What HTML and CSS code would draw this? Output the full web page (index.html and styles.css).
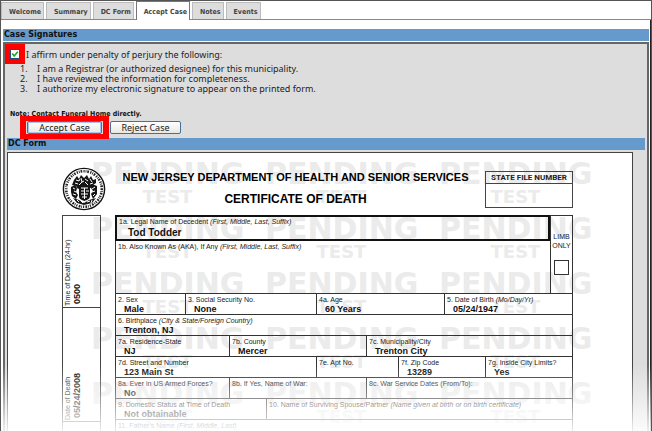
FILE: index.html
```html
<!DOCTYPE html>
<html lang="en">
<head>
<meta charset="utf-8">
<title>Accept Case</title>
<link rel="stylesheet" href="styles.css">
</head>
<body>
<div class="window">
  <nav class="tabs">
    <a class="tab" href="#welcome">Welcome</a>
    <a class="tab" href="#summary">Summary</a>
    <a class="tab" href="#dcform">DC Form</a>
    <a class="tab tab-active" href="#accept">Accept Case</a>
    <a class="tab" href="#notes">Notes</a>
    <a class="tab" href="#events">Events</a>
  </nav>
  <main class="content">
    <h2 class="bar">Case Signatures</h2>
    <div class="panel">
      <section class="signatures">
        <div class="affirm">
          <span class="mark mark-check"><input type="checkbox" id="affirm" checked><svg class="tick" viewBox="0 0 10 10" aria-hidden="true"><path d="M2.300 4.500 4.200 7 7.800 2.800" fill="none" stroke="#21a121" stroke-width="1.600"/></svg></span>
          <label for="affirm">I affirm under penalty of perjury the following:</label>
        </div>
        <ol class="terms">
          <li>I am a Registrar (or authorized designee) for this municipality.</li>
          <li>I have reviewed the information for completeness.</li>
          <li>I authorize my electronic signature to appear on the printed form.</li>
        </ol>
        <p class="note">Note: Contact Funeral Home directly.</p>
        <div class="actions">
          <span class="mark mark-button"><button class="btn btn-primary" type="button">Accept Case</button></span>
          <button class="btn" type="button">Reject Case</button>
        </div>
      </section>
      <h2 class="bar bar-form">DC Form</h2>
      <article class="paper">
        <div class="watermark" aria-hidden="true">
          <div class="wm"><b>PENDING</b><i>TEST</i></div><div class="wm"><b>PENDING</b><i>TEST</i></div><div class="wm"><b>PENDING</b><i>TEST</i></div>
          <div class="wm"><b>PENDING</b><i>TEST</i></div><div class="wm"><b>PENDING</b><i>TEST</i></div><div class="wm"><b>PENDING</b><i>TEST</i></div>
          <div class="wm"><b>PENDING</b><i>TEST</i></div><div class="wm"><b>PENDING</b><i>TEST</i></div><div class="wm"><b>PENDING</b><i>TEST</i></div>
          <div class="wm"><b>PENDING</b><i>TEST</i></div><div class="wm"><b>PENDING</b><i>TEST</i></div><div class="wm"><b>PENDING</b><i>TEST</i></div>
          <div class="wm"><b>PENDING</b><i>TEST</i></div><div class="wm"><b>PENDING</b><i>TEST</i></div><div class="wm"><b>PENDING</b><i>TEST</i></div>
        </div>
        <header class="cert-head">
          <svg class="seal" viewBox="0 0 44 44" aria-hidden="true">
            <circle cx="22" cy="22" r="20.600" fill="#fff" stroke="#111" stroke-width="1.400"/>
            <circle cx="22" cy="22" r="17.800" fill="none" stroke="#222" stroke-width="2.600" stroke-dasharray="1.200 1 .8 .9 1.700 1.300"/>
            <g fill="#151515">
              <path d="M12 13l3-4 2 3 2-4 3 3 3-3 2 4 2-3 2 4 3-1 0 4-3 2 1 2-4 1-2 2-3-2-2 2-2-2-3 1-2-3-4-1z"/>
              <path d="M9 20l4-2 2 3-1 4 2 3-2 4-4-3-1-4z"/>
              <path d="M35 19l-5-2-1 4 2 3-2 3 2 5 4-5z"/>
              <path d="M17 19h11v10c0 3-3 4-5.500 5-3-1-5.500-2-5.500-5z"/>
              <path d="M11 31l6 2 5 3 5-3 7-2-4 5-8 2-7-2z"/>
            </g>
            <path d="M14 13l3 1 1-2M19 11l1 4 2-1M23 12l3 2M28 12l2 3M13 16l3 1M17 18l3-3M23 15l3 3M28 17l3-1M19 21h7M19 24h3M24 24h3M19 27h7M20 30h5M22.500 21v11M11 21l2 1M12 24l2 1M11 27l3 1M33 20l-3 2M33 24l-3 1M33 27l-2 2M15 33l2 2M19 34l2 2M25 35l3-1M30 33l-1 3" fill="none" stroke="#fff" stroke-width="1"/>
          </svg>
          <div class="titles">
            <h1>NEW JERSEY DEPARTMENT OF HEALTH AND SENIOR SERVICES</h1>
            <h3>CERTIFICATE OF DEATH</h3>
          </div>
          <div class="file-no"><div class="file-no-label">STATE FILE NUMBER</div></div>
        </header>
        <div class="cert-body">
          <aside class="side">
            <div class="side-cell side-time"><span class="lab">Time of Death (24-hr)</span><span class="val">0500</span></div>
            <div class="side-cell side-date"><span class="lab">Date of Death</span><span class="val">05/24/2008</span></div>
          </aside>
          <div class="form">
            <div class="top">
              <div class="names">
                <div class="cell cell-name"><span class="lab">1a. Legal Name of Decedent <em>(First, Middle, Last, Suffix)</em></span><span class="val val-name">Tod Todder</span></div>
                <div class="cell cell-aka"><span class="lab">1b. Also Known As (AKA), If Any <em>(First, Middle, Last, Suffix)</em></span></div>
              </div>
              <div class="limb"><label for="limb">LIMB ONLY</label><input type="checkbox" id="limb"></div>
            </div>
            <div class="row row-2">
              <div class="cell"><span class="lab">2. Sex</span><span class="val">Male</span></div>
              <div class="cell"><span class="lab">3. Social Security No.</span><span class="val">None</span></div>
              <div class="cell"><span class="lab">4a. Age</span><span class="val">60 Years</span></div>
              <div class="cell"><span class="lab">5. Date of Birth <em>(Mo/Day/Yr)</em></span><span class="val">05/24/1947</span></div>
            </div>
            <div class="row">
              <div class="cell"><span class="lab">6. Birthplace <em>(City &amp; State/Foreign Country)</em></span><span class="val">Trenton, NJ</span></div>
            </div>
            <div class="row row-3">
              <div class="cell"><span class="lab">7a. Residence-State</span><span class="val">NJ</span></div>
              <div class="cell"><span class="lab">7b. County</span><span class="val">Mercer</span></div>
              <div class="cell"><span class="lab">7c. Municipality/City</span><span class="val">Trenton City</span></div>
            </div>
            <div class="row row-4">
              <div class="cell"><span class="lab">7d. Street and Number</span><span class="val">123 Main St</span></div>
              <div class="cell"><span class="lab">7e. Apt No.</span></div>
              <div class="cell"><span class="lab">7f. Zip Code</span><span class="val">13289</span></div>
              <div class="cell"><span class="lab">7g. Inside City Limits?</span><span class="val">Yes</span></div>
            </div>
            <div class="row row-3">
              <div class="cell"><span class="lab">8a. Ever in US Armed Forces?</span><span class="val">No</span></div>
              <div class="cell"><span class="lab">8b. If Yes, Name of War:</span></div>
              <div class="cell"><span class="lab">8c. War Service Dates (From/To):</span></div>
            </div>
            <div class="row row-5">
              <div class="cell"><span class="lab">9. Domestic Status at Time of Death</span><span class="val">Not obtainable</span></div>
              <div class="cell"><span class="lab">10. Name of Surviving Spouse/Partner <em>(Name given at birth or on birth certificate)</em></span></div>
            </div>
            <div class="row">
              <div class="cell"><span class="lab">11. Father's Name <em>(First, Middle, Last)</em></span></div>
            </div>
          </div>
        </div>
      </article>
    </div>
  </main>
  <div class="fade"></div>
</div>
</body>
</html>
```
FILE: styles.css
```css
* { box-sizing: border-box; }
body { margin: 0; font-family: "DejaVu Sans", Verdana, sans-serif; color: #222; background: #fff; }
h1, h2, h3, p, ol { margin: 0; }
.window {
  position: relative;
  height: 100vh;
  overflow: hidden;
  display: flex;
  flex-direction: column;
  border: 1px solid #555;
  border-bottom: 0;
}

/* tabs */
.tabs { display: flex; align-items: flex-end; gap: 2px; height: 19px; border-bottom: 1px solid #888; flex: none; }
.tab {
  height: 17px;
  padding: 0 2px 0 7px;
  border: 1px solid #bbb;
  border-bottom: 0;
  background: #ddd;
  color: #444;
  font: bold 7px/18px "DejaVu Sans Condensed", "DejaVu Sans", sans-serif;
  text-decoration: none;
  white-space: nowrap;
}
.tab-active { height: 19px; margin-bottom: -1px; background: #fff; border-color: #777; line-height: 20px; }

/* section bars */
.content { flex: 1; display: flex; flex-direction: column; padding: 9px 1px 0 2px; border-right: 1px solid #222; }
.bar { height: 12px; padding-left: 1px; background: #6699cc; color: #111; font: bold 8px/12px "DejaVu Sans", Verdana, sans-serif; }
.panel { flex: 1; display: flex; flex-direction: column; margin-top: 1px; padding: 0 2px; background: #ddd; border: 2px solid #666; border-bottom: 0; }

/* signatures */
.signatures { height: 94px; padding: 5px 0 0 3px; font-family: "Noto Sans", sans-serif; font-size: 9px; flex: none; }
.affirm { display: flex; align-items: center; gap: 6px; height: 10px; }
.mark { position: relative; display: inline-flex; }
.mark::after { content: ""; position: absolute; border: 5px solid #f00; pointer-events: none; }
.mark-check::after { inset: -5px; }
.mark-button::after { inset: -5px -7px; border-width: 5px 6px; }
.mark-check input { appearance: none; width: 10px; height: 10px; margin: 0; border: 1px solid #1c5180; background: #fff; }
.tick { position: absolute; inset: 0; width: 10px; height: 10px; pointer-events: none; }
.terms { margin-top: 5px; padding-left: 10px; line-height: 10px; list-style: none; counter-reset: term; }
.terms li { counter-increment: term; }
.terms li::before { content: counter(term) "."; display: inline-block; width: 17px; }
.note { margin-top: 15px; font: bold 7px/10px "DejaVu Sans Condensed", "DejaVu Sans", sans-serif; color: #111; }
.actions { display: flex; gap: 8px; padding: 2px 0 0 17px; }
.btn { height: 13px; width: 71px; padding: 0; border: 1px solid #4a6f96; border-radius: 2px; background: linear-gradient(#fff, #e8e8e2); color: #222; font: 9px/11px "Noto Sans", sans-serif; }
.btn-primary { width: 75px; box-shadow: inset 0 0 0 1px #a8c4ee; }

/* certificate */
.paper { position: relative; flex: 1; margin: 2px 12px 0 0; padding: 14px 59px 0 54px; background: #fff; border: 1px solid #444; border-bottom: 0; font-family: "Liberation Sans", Arial, sans-serif; }
.watermark { position: absolute; top: 8px; left: 83px; display: grid; grid-template-columns: repeat(3, 174px); grid-auto-rows: 55px; color: #ebebeb; font-family: "DejaVu Sans", sans-serif; }
.wm { width: 153px; text-align: center; }
.wm b { display: block; font-size: 30px; line-height: 26px; }
.wm i { display: block; font: bold 18px/20px "DejaVu Sans", sans-serif; }
.cert-head { position: relative; display: flex; height: 48px; }
.seal { width: 44px; height: 44px; flex: none; }
.titles { flex: 1; text-align: center; color: #000; }
.titles h1 { margin-top: 3px; font-size: 11px; line-height: 14px; white-space: nowrap; }
.titles h3 { margin-top: 8px; font-size: 12px; line-height: 14px; }
.file-no { width: 88px; height: 37px; margin-top: 4px; border: 1px solid #444; }
.file-no-label { height: 12px; border-bottom: 1px solid #444; text-align: center; font: bold 8px/12px Roboto, sans-serif; white-space: nowrap; }
.cert-body { position: relative; display: flex; gap: 14px; }
.side { width: 39px; flex: none; border: 1px solid #444; border-bottom: 0; }
.side-cell { writing-mode: vertical-rl; transform: rotate(180deg); width: 37px; padding-top: 1px; border-top: 1px solid #444; }
.form { flex: 1; border: 1px solid #333; border-bottom: 0; }
.lab { display: block; font-size: 7px; line-height: 9px; white-space: nowrap; color: #222; }
.val { display: block; padding-left: 6px; font-size: 9px; line-height: 10px; font-weight: bold; white-space: nowrap; color: #111; }
.val-name { padding-left: 9px; font-size: 10px; line-height: 14px; }
.side .val { padding: 2px 0 0; }
.side-time { height: 92px; }
.side-date { height: 114px; }
.top { display: flex; height: 78px; border-bottom: 1px solid #333; }
.names { flex: 1; }
.cell { padding: 1px 0 0 2px; min-width: 0; }
.cell-name { height: 26px; margin: -1px 0 0 -1px; padding-top: 0; border: 2px solid #111; }
.limb { width: 22px; border-left: 1px solid #333; display: flex; flex-direction: column; align-items: center; text-align: center; font-size: 7px; line-height: 9px; padding-top: 16px; gap: 10px; }
.limb input { appearance: none; width: 15px; height: 15px; margin: 0; border: 1px solid #333; background: #fff; }
.row { display: grid; height: 21px; border-bottom: 1px solid #333; }
.row .cell + .cell { border-left: 1px solid #333; }
.row-2 { grid-template-columns: 69fr 131fr 128fr 128fr; }
.row-3 { grid-template-columns: 113fr 137fr 206fr; }
.row-4 { grid-template-columns: 200fr 82fr 87fr 87fr; }
.row-5 { grid-template-columns: 150fr 306fr; }

/* page fades out at the lower edge */
.fade { position: absolute; left: -1px; right: -1px; bottom: 0; height: 66px; background: linear-gradient(rgba(255,255,255,0), rgba(255,255,255,.9)); pointer-events: none; }
```
